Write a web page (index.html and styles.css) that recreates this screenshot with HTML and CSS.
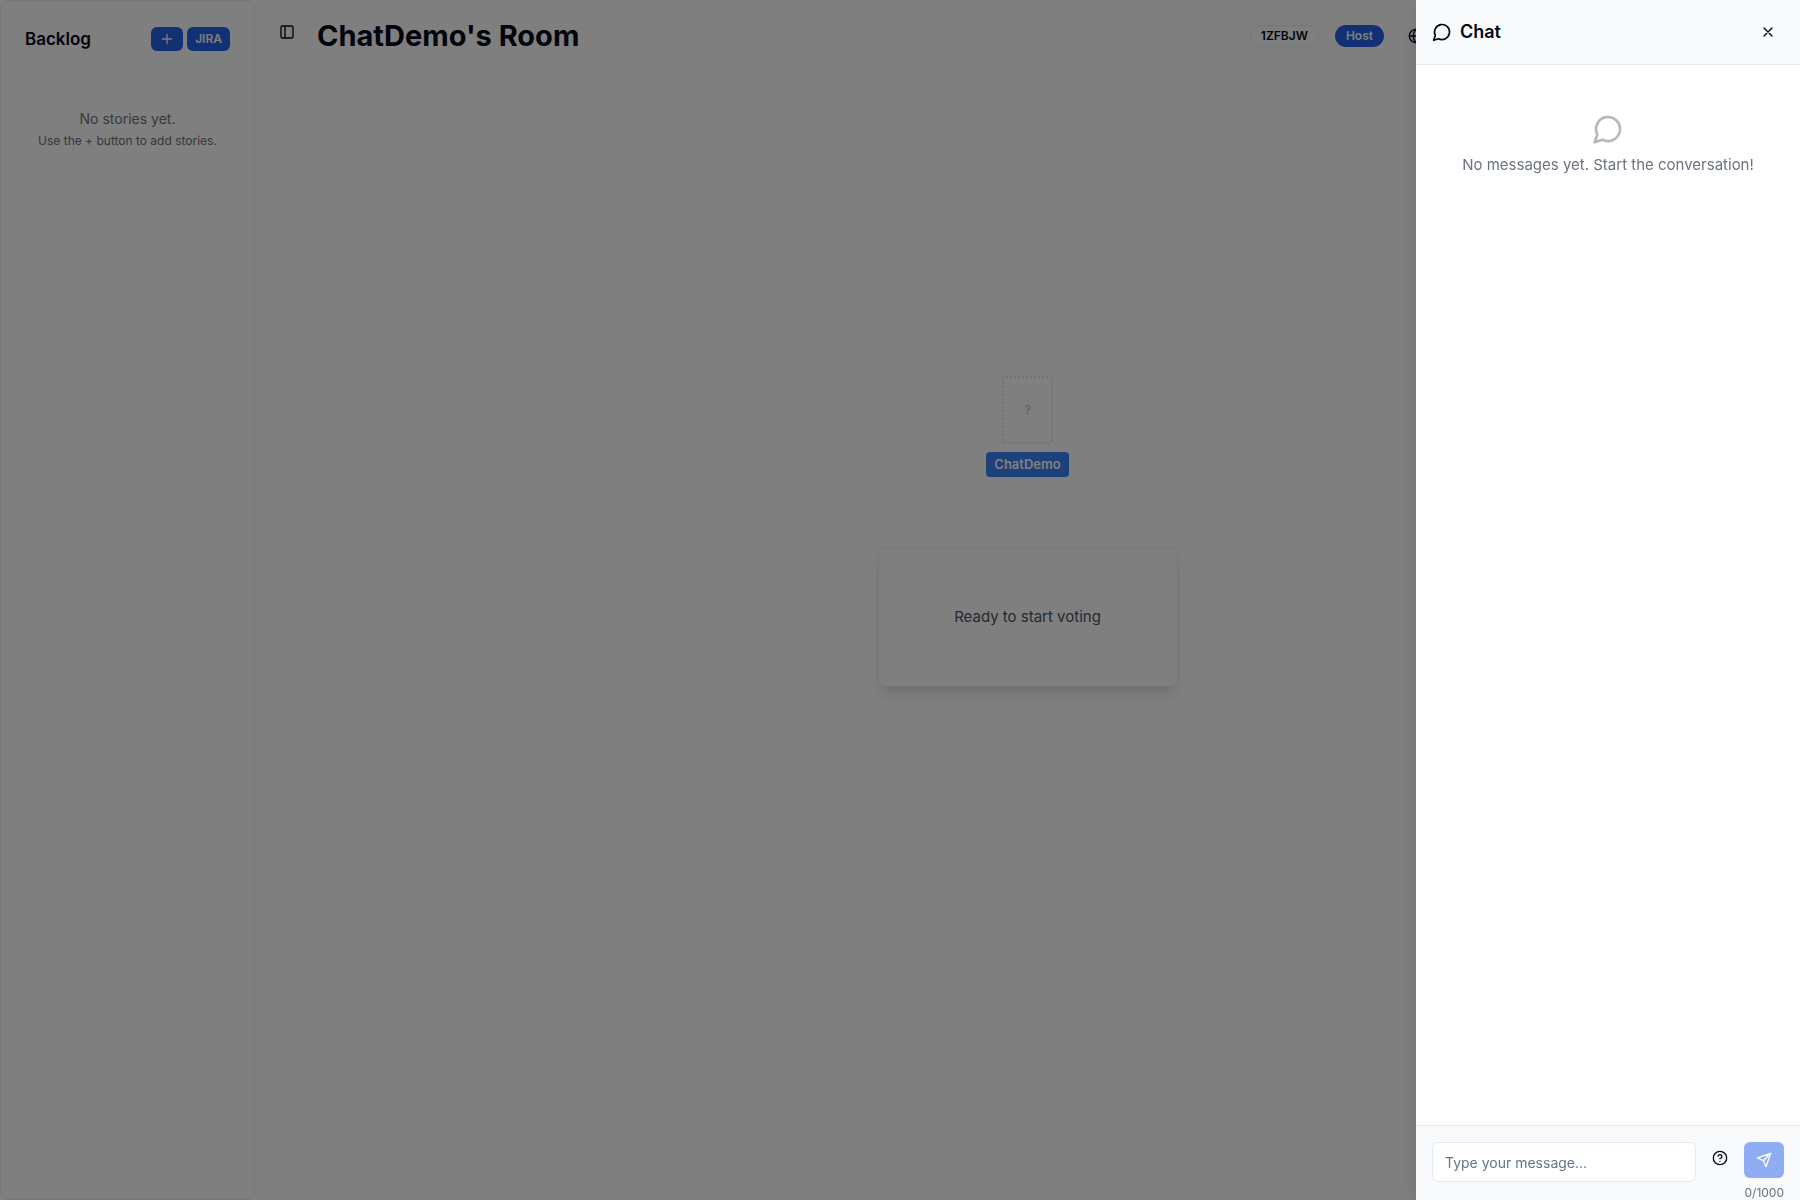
FILE: index.html
```html
<!DOCTYPE html>
<html lang="en">
<head>
<meta charset="utf-8">
<title>ChatDemo's Room</title>
<link rel="stylesheet" href="styles.css">
</head>
<body>
<div class="app">
  <aside class="sidebar">
    <header class="sidebar-header">
      <h2 class="sidebar-title">Backlog</h2>
      <div class="sidebar-actions">
        <button class="btn-small" type="button" aria-label="Add story">
          <svg class="icon" width="16" height="16" viewBox="0 0 24 24"><path d="M5 12h14M12 5v14"/></svg>
        </button>
        <button class="btn-small" type="button">JIRA</button>
      </div>
    </header>
    <div class="sidebar-empty">
      <p class="empty-title">No stories yet.</p>
      <p class="empty-hint">Use the + button to add stories.</p>
    </div>
  </aside>
  <main class="room">
    <header class="room-header">
      <button class="icon-btn" type="button" aria-label="Toggle sidebar">
        <svg class="icon" width="16" height="16" viewBox="0 0 24 24"><rect x="3" y="3" width="18" height="18" rx="2"/><path d="M9 3v18"/></svg>
      </button>
      <h1 class="room-title">ChatDemo's Room</h1>
      <div class="room-meta">
        <span class="pill pill-outline">1ZFBJW</span>
        <span class="pill pill-primary">Host</span>
        <button class="meta-btn" type="button" aria-label="Language">
          <svg class="icon" width="16" height="16" viewBox="0 0 24 24"><circle cx="12" cy="12" r="10"/><path d="M12 2a14.5 14.5 0 0 0 0 20 14.5 14.5 0 0 0 0-20M2 12h20"/></svg>
        </button>
      </div>
    </header>
    <section class="table-area">
      <div class="player">
        <div class="player-card">?</div>
        <span class="player-name">ChatDemo</span>
      </div>
      <div class="status-card">Ready to start voting</div>
    </section>
  </main>
</div>
<div class="backdrop"></div>
<section class="drawer" role="dialog" aria-labelledby="chat-title">
  <header class="drawer-header">
    <svg class="icon" width="20" height="20" viewBox="0 0 24 24"><path d="M7.9 20A9 9 0 1 0 4 16.1L2 22Z"/></svg>
    <h2 class="drawer-title" id="chat-title">Chat</h2>
    <button class="icon-btn" type="button" aria-label="Close chat">
      <svg class="icon" width="16" height="16" viewBox="0 0 24 24"><path d="M18 6 6 18M6 6l12 12"/></svg>
    </button>
  </header>
  <div class="messages">
    <svg class="icon messages-icon" width="32" height="32" viewBox="0 0 24 24"><path d="M7.9 20A9 9 0 1 0 4 16.1L2 22Z"/></svg>
    <p class="messages-empty">No messages yet. Start the conversation!</p>
  </div>
  <form class="composer">
    <input class="composer-input" type="text" placeholder="Type your message..." aria-label="Message">
    <button class="icon-btn" type="button" aria-label="Help">
      <svg class="icon" width="16" height="16" viewBox="0 0 24 24"><circle cx="12" cy="12" r="10"/><path d="M9.09 9a3 3 0 0 1 5.83 1c0 2-3 3-3 3M12 17h.01"/></svg>
    </button>
    <div class="send">
      <button class="send-btn" type="submit" aria-label="Send" disabled>
        <svg class="icon" width="16" height="16" viewBox="0 0 24 24"><path d="m22 2-7 20-4-9-9-4ZM22 2 11 13"/></svg>
      </button>
      <span class="counter">0/1000</span>
    </div>
  </form>
</section>
</body>
</html>
```
FILE: styles.css
```css
* { box-sizing: border-box; margin: 0; }

body {
  font-family: Inter, "Liberation Sans", sans-serif;
  font-size: 15px;
  line-height: 24px;
  color: #020817;
  background: #fff;
}

button, input { font: inherit; color: inherit; }
button { border: 0; padding: 0; background: none; }

.icon {
  display: block;
  flex: none;
  fill: none;
  stroke: currentColor;
  stroke-width: 2;
  stroke-linecap: round;
  stroke-linejoin: round;
}

.icon-btn {
  display: flex;
  align-items: center;
  justify-content: center;
  width: 32px;
  height: 32px;
  border-radius: 6px;
}

.app { display: flex; min-height: 100vh; }

/* Backlog */
.sidebar {
  width: 255px;
  flex: none;
  padding: 24px;
  border: 1px solid #ebeef2;
  border-radius: 8px;
}
.sidebar-header { display: flex; align-items: center; justify-content: space-between; height: 28px; }
.sidebar-title { font-size: 17px; line-height: 28px; font-weight: 600; }
.sidebar-actions { display: flex; gap: 4px; }
.btn-small {
  display: flex;
  align-items: center;
  height: 24px;
  padding: 0 8px;
  border-radius: 6px;
  background: #2563eb;
  color: #f8fafc;
  font-size: 12px;
  font-weight: 600;
}
.sidebar-empty { padding-top: 56px; text-align: center; color: #6b7280; white-space: nowrap; }
.empty-title { font-size: 14px; line-height: 20px; }
.empty-hint { margin-top: 4px; font-size: 12px; line-height: 16px; }

/* Room */
.room { flex: 1; display: flex; flex-direction: column; }
.room-header { display: flex; align-items: flex-start; gap: 14px; padding: 16px; }
.room-title { font-size: 29px; line-height: 40px; font-weight: 700; }
.room-meta { display: flex; align-items: center; gap: 16px; height: 40px; margin-left: auto; margin-right: 352px; }
.pill {
  padding: 2px 10px;
  border: 1px solid transparent;
  border-radius: 999px;
  font-size: 12px;
  line-height: 16px;
  font-weight: 600;
}
.pill-outline { border-color: #ebeef2; }
.pill-primary { background: #2563eb; color: #f8fafc; }
.meta-btn { padding: 8px; }

.table-area { flex: 1; display: flex; flex-direction: column; align-items: center; padding-top: 304px; }
.player { display: flex; flex-direction: column; align-items: center; gap: 8px; }
.player-card {
  display: flex;
  align-items: center;
  justify-content: center;
  width: 51px;
  height: 68px;
  border: 2px dotted #e2e5e9;
  border-radius: 4px;
  color: #b4b8bf;
  font-size: 12px;
}
.player-name {
  padding: 4px 8px;
  border-radius: 4px;
  background: #3b82f6;
  color: #fff;
  font-size: 13px;
  line-height: 17px;
  font-weight: 600;
}
.status-card {
  display: flex;
  align-items: center;
  justify-content: center;
  width: 300px;
  height: 140px;
  margin-top: 70px;
  border: 1px solid #ebeef2;
  border-radius: 8px;
  box-shadow: 0 10px 15px -3px rgba(0, 0, 0, 0.1), 0 4px 6px -4px rgba(0, 0, 0, 0.1);
  color: #4b5563;
}

.backdrop { position: fixed; inset: 0; background: rgba(0, 0, 0, 0.5); }

/* Chat drawer */
.drawer {
  position: fixed;
  top: 0;
  right: 0;
  bottom: 0;
  width: 384px;
  display: flex;
  flex-direction: column;
  background: #fff;
  box-shadow: 0 8px 16px rgba(0, 0, 0, 0.1);
}
.drawer-header {
  display: flex;
  align-items: center;
  gap: 8px;
  padding: 16px;
  border-bottom: 1px solid #e5e7eb;
  background: #f9fafb;
}
.drawer-title { flex: 1; font-size: 18px; line-height: 28px; font-weight: 600; }
.messages { flex: 1; padding: 48px 16px; text-align: center; color: #6b7280; }
.messages-icon { margin: 0 auto 8px; opacity: 0.5; }
.composer {
  display: flex;
  align-items: flex-start;
  gap: 8px;
  padding: 16px 16px 0;
  border-top: 1px solid #e5e7eb;
  background: #f9fafb;
}
.composer-input {
  flex: 1;
  min-width: 0;
  height: 40px;
  padding: 0 12px;
  border: 1px solid #e2e8f0;
  border-radius: 6px;
  background: #fff;
  font-size: 14px;
}
.composer-input::placeholder { color: #64748b; opacity: 1; }
.send { display: flex; flex-direction: column; align-items: flex-end; gap: 8px; }
.send-btn {
  display: flex;
  align-items: center;
  justify-content: center;
  width: 40px;
  height: 36px;
  border-radius: 6px;
  background: #2563eb;
  color: #fff;
  opacity: 0.5;
}
.counter { font-size: 12px; line-height: 14px; color: #6b7280; }
```
